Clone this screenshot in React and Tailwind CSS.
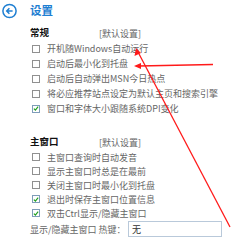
import React from "react";

const font = { fontFamily: '"Noto Sans CJK SC", "Noto Sans", sans-serif' };

function Box({ checked }) {
  return (
    <span
      className={
        "relative flex h-[8px] w-[8px] shrink-0 items-center justify-center border bg-white " +
        (checked ? "border-[#7f9db9]" : "border-[#909090]")
      }
    >
      {checked && (
        <svg width="7" height="7" viewBox="0 0 7 7" className="block">
          <path d="M1 3.6 L2.8 5.3 L6 1.4" fill="none" stroke="#21a121" strokeWidth="1.4" />
        </svg>
      )}
    </span>
  );
}

function Row({ checked, children, h }) {
  return (
    <div className={"flex items-center gap-[7px] pl-[2px] " + h}>
      <Box checked={checked} />
      <span className="whitespace-nowrap text-[9px] leading-none text-[#666666]">{children}</span>
    </div>
  );
}

function Heading({ title }) {
  return (
    <div className="flex h-[14px] items-center">
      <span className="w-[69px] text-[9.5px] font-bold leading-none text-[#111111]">{title}</span>
      <span className="text-[9px] leading-none text-[#666666]">[默认设置]</span>
    </div>
  );
}

export default function App() {
  return (
    <div className="relative h-[243px] w-[249px] overflow-hidden bg-white" style={font}>
      <div className="flex h-[22px] items-center pl-[2px]">
        <svg width="16" height="16" viewBox="0 0 16 16" className="block">
          <circle cx="7.5" cy="8" r="6.6" fill="none" stroke="#1f7fd2" strokeWidth="1.5" />
          <path d="M10.6 8 H4.8 M7.4 5.3 L4.7 8 L7.4 10.7" fill="none" stroke="#1f7fd2" strokeWidth="1.5" />
        </svg>
        <span className="ml-[12px] text-[11.5px] font-bold leading-none text-[#1f7fd2]">设置</span>
      </div>

      <div className="pl-[30px]">
        <div className="mt-[4px]">
          <Heading title="常规" />
        </div>
        <div className="mt-[1px]">
          <Row h="h-[15px]">开机随Windows自动运行</Row>
          <Row h="h-[15px]">启动后最小化到托盘</Row>
          <Row h="h-[15px]">启动后自动弹出MSN今日热点</Row>
          <Row h="h-[15px]">将必应推荐站点设定为默认主页和搜索引擎</Row>
          <Row h="h-[15px]" checked>窗口和字体大小跟随系统DPI变化</Row>
        </div>

        <div className="mt-[19px]">
          <Heading title="主窗口" />
        </div>
        <div className="mt-[1px]">
          <Row h="h-[14px]">主窗口查询时自动发音</Row>
          <Row h="h-[14px]">显示主窗口时总是在最前</Row>
          <Row h="h-[14px]">关闭主窗口时最小化到托盘</Row>
          <Row h="h-[14px]" checked>退出时保存主窗口位置信息</Row>
          <Row h="h-[14px]" checked>双击Ctrl显示/隐藏主窗口</Row>
        </div>
        <div className="mt-[1px] flex h-[16px] items-center">
          <span className="w-[98px] whitespace-nowrap text-[9px] leading-none text-[#666666]">显示/隐藏主窗口 热键：</span>
          <div className="flex h-[16px] w-[94px] items-center border border-[#b9c9da] bg-white pl-[3px] text-[9px] leading-none text-[#333]">
            无
          </div>
        </div>
      </div>

      <svg className="pointer-events-none absolute left-0 top-0" width="249" height="243" viewBox="0 0 249 243">
        <line x1="230" y1="227" x2="138" y2="52" stroke="#ff1a1a" strokeWidth="1.3" />
        <path d="M136 48 L134.5 56 L141 53 Z" fill="#ff1a1a" />
        <line x1="213" y1="64.5" x2="139" y2="66" stroke="#ff1a1a" strokeWidth="1.3" />
        <path d="M134 66 L141 63 L141 69 Z" fill="#ff1a1a" />
      </svg>
    </div>
  );
}
